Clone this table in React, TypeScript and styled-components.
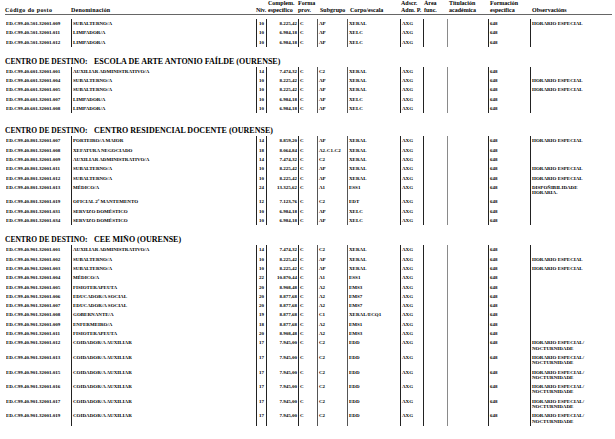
import React from "react";
import styled, { createGlobalStyle } from "styled-components";

const GlobalStyle = createGlobalStyle`
  html, body { margin: 0; padding: 0; background: #fff; }
  body {
    font-family: "Liberation Serif", "Times New Roman", serif;
    color: #000;
  }
`;

const COLS = "66px 185px 10px 32px 19px 30px 53px 23px 24px 41px 42px 1fr";

type Line = "dark" | "gray" | "light" | "none";
const LINE_COLORS: Record<Line, string> = {
  dark: "#222",
  gray: "#555",
  light: "#8a8a8a",
  none: "transparent",
};

const Page = styled.div`
  width: 615px;
  height: 439px;
  box-sizing: border-box;
  padding: 0 3px 0 5px;
  overflow: hidden;
  background: #fff;
`;

const HeaderRow = styled.div`
  display: grid;
  grid-template-columns: ${COLS};
  align-items: end;
  height: 14px;
  border-bottom: 1px solid #666;
  font-size: 6px;
  font-weight: bold;
  line-height: 7px;
`;

const HeaderCell = styled.div<{ $pl?: number; $ls?: number }>`
  padding-left: ${(p) => p.$pl ?? 0}px;
  letter-spacing: ${(p) => p.$ls ?? 0}px;
  white-space: nowrap;
`;

const Section = styled.section<{ $mt: number }>`
  margin-top: ${(p) => p.$mt}px;
`;

const Title = styled.div`
  display: flex;
  align-items: baseline;
  font-weight: bold;
  line-height: 8px;
  height: 8px;
  margin-bottom: 1px;
  white-space: nowrap;
`;

const TitleLabel = styled.span`
  width: 89px;
  flex: none;
  font-size: 7.5px;
`;

const TitleName = styled.span`
  font-size: 8px;
`;

const Table = styled.div`
  display: flex;
  flex-direction: column;
`;

const Row = styled.div`
  display: grid;
  grid-template-columns: ${COLS};
  font-size: 5px;
  font-weight: bold;
  line-height: 5.3px;
`;

const Cell = styled.div<{ $line: Line; $align?: string; $pl?: number; $pr?: number }>`
  border-left: 1px solid ${(p) => LINE_COLORS[p.$line]};
  padding: 2px ${(p) => p.$pr ?? 0}px 2px ${(p) => p.$pl ?? 1}px;
  text-align: ${(p) => p.$align ?? "left"};
  white-space: nowrap;
  overflow: hidden;
`;

const ObsLine = styled.div``;

type Post = {
  code: string;
  name: string;
  niv: string;
  comp: string;
  sub: string;
  corpo: string;
  obs?: string[];
};

type Centre = { title?: string; mt: number; rows: Post[] };

const HE = "HORARIO ESPECIAL";
const HN = ["HORARIO ESPECIAL/", "NOCTURNIDADE"];

const CENTRES: Centre[] = [
  {
    mt: 4,
    rows: [
      { code: "ED.C99.40.501.32001.009", name: "SUBALTERNO/A", niv: "10", comp: "8.225,42", sub: "AP", corpo: "XERAL", obs: [HE] },
      { code: "ED.C99.40.501.32001.011", name: "LIMPADOR/A", niv: "10", comp: "6.984,18", sub: "AP", corpo: "XELC" },
      { code: "ED.C99.40.501.32001.012", name: "LIMPADOR/A", niv: "10", comp: "6.984,18", sub: "AP", corpo: "XELC" },
    ],
  },
  {
    title: "ESCOLA DE ARTE ANTONIO FAÍLDE (OURENSE)",
    mt: 11,
    rows: [
      { code: "ED.C99.40.601.32001.001", name: "AUXILIAR ADMINISTRATIVO/A", niv: "14", comp: "7.474,32", sub: "C2", corpo: "XERAL" },
      { code: "ED.C99.40.601.32001.004", name: "SUBALTERNO/A", niv: "10", comp: "8.225,42", sub: "AP", corpo: "XERAL", obs: [HE] },
      { code: "ED.C99.40.601.32001.005", name: "SUBALTERNO/A", niv: "10", comp: "8.225,42", sub: "AP", corpo: "XERAL", obs: [HE] },
      { code: "ED.C99.40.601.32001.007", name: "LIMPADOR/A", niv: "10", comp: "6.984,18", sub: "AP", corpo: "XELC" },
      { code: "ED.C99.40.601.32001.008", name: "LIMPADOR/A", niv: "10", comp: "6.984,18", sub: "AP", corpo: "XELC" },
    ],
  },
  {
    title: "CENTRO RESIDENCIAL DOCENTE (OURENSE)",
    mt: 14,
    rows: [
      { code: "ED.C99.40.801.32001.007", name: "PORTEIRO/A MAIOR", niv: "14", comp: "8.859,20", sub: "AP", corpo: "XERAL", obs: [HE] },
      { code: "ED.C99.40.801.32001.008", name: "XEFATURA NEGOCIADO", niv: "18", comp: "8.064,84", sub: "A2-C1-C2", corpo: "XERAL" },
      { code: "ED.C99.40.801.32001.009", name: "AUXILIAR ADMINISTRATIVO/A", niv: "14", comp: "7.474,32", sub: "C2", corpo: "XERAL" },
      { code: "ED.C99.40.801.32001.011", name: "SUBALTERNO/A", niv: "10", comp: "8.225,42", sub: "AP", corpo: "XERAL", obs: [HE] },
      { code: "ED.C99.40.801.32001.012", name: "SUBALTERNO/A", niv: "10", comp: "8.225,42", sub: "AP", corpo: "XERAL", obs: [HE] },
      { code: "ED.C99.40.801.32001.013", name: "MÉDICO/A", niv: "24", comp: "13.325,62", sub: "A1", corpo: "ESS1", obs: ["DISPOÑIBILIDADE", "HORARIA."] },
      { code: "ED.C99.40.801.32001.019", name: "OFICIAL 2ª MANTEMENTO", niv: "12", comp: "7.123,76", sub: "C2", corpo: "EDT" },
      { code: "ED.C99.40.801.32001.031", name: "SERVIZO DOMÉSTICO", niv: "10", comp: "6.984,18", sub: "AP", corpo: "XELC" },
      { code: "ED.C99.40.801.32001.034", name: "SERVIZO DOMÉSTICO", niv: "10", comp: "6.984,18", sub: "AP", corpo: "XELC" },
    ],
  },
  {
    title: "CEE MIÑO (OURENSE)",
    mt: 11,
    rows: [
      { code: "ED.C99.40.901.32001.001", name: "AUXILIAR ADMINISTRATIVO/A", niv: "14", comp: "7.474,32", sub: "C2", corpo: "XERAL" },
      { code: "ED.C99.40.901.32001.002", name: "SUBALTERNO/A", niv: "10", comp: "8.225,42", sub: "AP", corpo: "XERAL", obs: [HE] },
      { code: "ED.C99.40.901.32001.003", name: "SUBALTERNO/A", niv: "10", comp: "8.225,42", sub: "AP", corpo: "XERAL", obs: [HE] },
      { code: "ED.C99.40.901.32001.004", name: "MÉDICO/A", niv: "22", comp: "10.870,44", sub: "A1", corpo: "ESS1" },
      { code: "ED.C99.40.901.32001.005", name: "FISIOTERAPEUTA", niv: "20", comp: "8.908,48", sub: "A2", corpo: "EMS3" },
      { code: "ED.C99.40.901.32001.006", name: "EDUCADOR/A SOCIAL", niv: "20", comp: "8.877,68", sub: "A2", corpo: "EMS7" },
      { code: "ED.C99.40.901.32001.007", name: "EDUCADOR/A SOCIAL", niv: "20", comp: "8.877,68", sub: "A2", corpo: "EMS7" },
      { code: "ED.C99.40.901.32001.008", name: "GOBERNANTE/A", niv: "19", comp: "8.877,68", sub: "C1", corpo: "XERAL/ECQ1" },
      { code: "ED.C99.40.901.32001.009", name: "ENFERMEIRO/A", niv: "18", comp: "8.877,68", sub: "A2", corpo: "EMS1" },
      { code: "ED.C99.40.901.32001.011", name: "FISIOTERAPEUTA", niv: "20", comp: "8.908,48", sub: "A2", corpo: "EMS3" },
      { code: "ED.C99.40.901.32001.012", name: "COIDADOR/A AUXILIAR", niv: "17", comp: "7.945,00", sub: "C2", corpo: "EDD", obs: HN },
      { code: "ED.C99.40.901.32001.013", name: "COIDADOR/A AUXILIAR", niv: "17", comp: "7.945,00", sub: "C2", corpo: "EDD", obs: HN },
      { code: "ED.C99.40.901.32001.015", name: "COIDADOR/A AUXILIAR", niv: "17", comp: "7.945,00", sub: "C2", corpo: "EDD", obs: HN },
      { code: "ED.C99.40.901.32001.016", name: "COIDADOR/A AUXILIAR", niv: "17", comp: "7.945,00", sub: "C2", corpo: "EDD", obs: HN },
      { code: "ED.C99.40.901.32001.017", name: "COIDADOR/A AUXILIAR", niv: "17", comp: "7.945,00", sub: "C2", corpo: "EDD", obs: HN },
      { code: "ED.C99.40.901.32001.019", name: "COIDADOR/A AUXILIAR", niv: "17", comp: "7.945,00", sub: "C2", corpo: "EDD", obs: HN },
    ],
  },
];

function PostRow({ p }: { p: Post }) {
  return (
    <Row>
      <Cell $line="none" $pl={0}>{p.code}</Cell>
      <Cell $line="dark">{p.name}</Cell>
      <Cell $line="dark" $align="center" $pl={0}>{p.niv}</Cell>
      <Cell $line="dark" $align="right" $pl={0} $pr={1}>{p.comp}</Cell>
      <Cell $line="dark">C</Cell>
      <Cell $line="gray">{p.sub}</Cell>
      <Cell $line="gray">{p.corpo}</Cell>
      <Cell $line="dark">AXG</Cell>
      <Cell $line="dark" />
      <Cell $line="light" />
      <Cell $line="dark">648</Cell>
      <Cell $line="dark">
        {(p.obs ?? []).map((o) => (
          <ObsLine key={o}>{o}</ObsLine>
        ))}
      </Cell>
    </Row>
  );
}

export default function App() {
  return (
    <Page>
      <GlobalStyle />
      <HeaderRow>
        <HeaderCell $ls={0.4}>Código do posto</HeaderCell>
        <HeaderCell $ls={0.2}>Denominación</HeaderCell>
        <HeaderCell $pl={0}>Niv.</HeaderCell>
        <HeaderCell $pl={2}>Complem.<br />específico</HeaderCell>
        <HeaderCell $pl={0}>Forma<br />prov.</HeaderCell>
        <HeaderCell $pl={3}>Subgrupo</HeaderCell>
        <HeaderCell $pl={3}>Corpo/escala</HeaderCell>
        <HeaderCell $pl={1}>Adscr.<br />Adm. P.</HeaderCell>
        <HeaderCell $pl={1}>Área<br />func.</HeaderCell>
        <HeaderCell $pl={2}>Titulación<br />académica</HeaderCell>
        <HeaderCell $pl={2}>Formación<br />específica</HeaderCell>
        <HeaderCell $pl={2}>Observacións</HeaderCell>
      </HeaderRow>
      {CENTRES.map((c, i) => (
        <Section key={i} $mt={c.mt}>
          {c.title && (
            <Title>
              <TitleLabel>CENTRO DE DESTINO:</TitleLabel>
              <TitleName>{c.title}</TitleName>
            </Title>
          )}
          <Table>
            {c.rows.map((p) => (
              <PostRow key={p.code} p={p} />
            ))}
          </Table>
        </Section>
      ))}
    </Page>
  );
}
